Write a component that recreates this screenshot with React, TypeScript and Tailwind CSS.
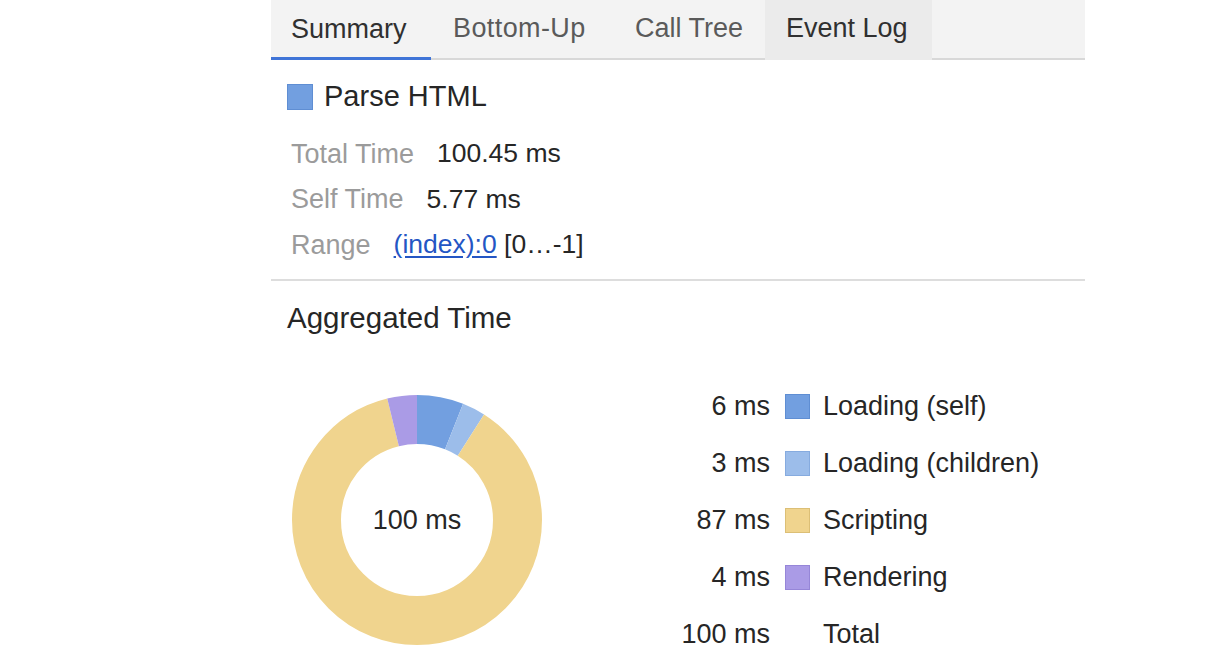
import React from "react";

type Slice = { label: string; value: number; ms: string; color: string; edge: string };

const slices: Slice[] = [
  { label: "Loading (self)", value: 6, ms: "6 ms", color: "#729fe0", edge: "#5f8ed3" },
  { label: "Loading (children)", value: 3, ms: "3 ms", color: "#9cbdea", edge: "#86abdf" },
  { label: "Scripting", value: 87, ms: "87 ms", color: "#f0d48e", edge: "#dcbf76" },
  { label: "Rendering", value: 4, ms: "4 ms", color: "#aa9be6", edge: "#9686d8" },
];

const tabs = [
  { name: "Summary", cls: "w-[160px] pl-[20px] pt-[1px] text-[#303030] border-b-[3px] border-[#3f74d7]" },
  { name: "Bottom-Up", cls: "w-[183px] pl-[22px] pb-[3px] text-[#5a5a5a] tracking-[0.4px]" },
  { name: "Call Tree", cls: "w-[151px] pl-[21px] pb-[3px] text-[#5a5a5a]" },
  { name: "Event Log", cls: "w-[167px] pl-[21px] pb-[3px] text-[#303030] bg-[#ebebeb]" },
];

const Donut = () => {
  const r = 100.5;
  const c = 2 * Math.PI * r;
  const total = slices.reduce((s, x) => s + x.value, 0);
  let offset = 0;
  return (
    <div className="relative w-[250px] h-[250px] shrink-0">
      <svg width="250" height="250" viewBox="0 0 250 250">
        <g transform="rotate(-90 125 125)">
          {slices.map((s) => {
            const len = (s.value / total) * c;
            const el = (
              <circle
                key={s.label}
                cx="125"
                cy="125"
                r={r}
                fill="none"
                stroke={s.color}
                strokeWidth="49"
                strokeDasharray={`${len} ${c - len}`}
                strokeDashoffset={-offset}
              />
            );
            offset += len;
            return el;
          })}
        </g>
      </svg>
      <div className="absolute inset-0 flex items-center justify-center text-[27px] text-[#262626]">
        100 ms
      </div>
    </div>
  );
};

const InfoRow = ({ label, children }: { label: string; children: React.ReactNode }) => (
  <div className="flex items-center gap-[23px] h-[30px] pl-[20px]">
    <span className="text-[27px] text-[#9b9b9b]">{label}</span>
    <span className="text-[26.5px] text-[#262626]">{children}</span>
  </div>
);

export default function App() {
  return (
    <div
      className="w-[1214px] h-[666px] bg-white overflow-hidden"
      style={{ fontFamily: '"Liberation Sans", Arial, sans-serif' }}
    >
      <div className="ml-[271px] w-[814px]">
        {/* Tab strip */}
        <div className="flex h-[60px] bg-[#f3f3f3] border-b-2 border-[#d8d8d8]">
          {tabs.map((t) => (
            <div
              key={t.name}
              className={`h-[60px] -mb-[2px] flex items-center text-[27px] ${t.cls}`}
            >
              {t.name}
            </div>
          ))}
        </div>

        {/* Title */}
        <div className="flex items-center gap-[11px] h-[30px] mt-[22px] pl-[16px]">
          <span className="w-[26px] h-[26px] bg-[#729fe0] border border-[#5f8ed3]" />
          <span className="text-[29px] text-[#262626]">Parse HTML</span>
        </div>

        <div className="mt-[27px] flex flex-col gap-[15.5px]">
          <InfoRow label="Total Time">100.45 ms</InfoRow>
          <InfoRow label="Self Time">5.77 ms</InfoRow>
          <InfoRow label="Range">
            <a className="text-[#2456c4] underline underline-offset-[3px]">(index):0</a> [0…-1]
          </InfoRow>
        </div>

        <div className="mt-[19px] h-[2px] bg-[#dddddd]" />

        <div className="mt-[20px] h-[34px] flex items-center pl-[16px] text-[29.5px] text-[#262626]">
          Aggregated Time
        </div>

        {/* Chart + legend */}
        <div className="flex items-start mt-[56px] pl-[21px]">
          <div className="mt-[4px]">
            <Donut />
          </div>
          <div className="ml-[128px] flex flex-col gap-[27px]">
            {slices.map((s) => (
              <div key={s.label} className="flex items-center h-[30px] text-[27px] text-[#262626]">
                <span className="w-[100px] text-right">{s.ms}</span>
                <span
                  className="ml-[15px] w-[25px] h-[25px] border"
                  style={{ backgroundColor: s.color, borderColor: s.edge }}
                />
                <span className="ml-[13px]">{s.label}</span>
              </div>
            ))}
            <div className="flex items-center h-[30px] text-[27px] text-[#262626]">
              <span className="w-[100px] text-right">100 ms</span>
              <span className="ml-[15px] w-[25px] h-[25px]" />
              <span className="ml-[13px]">Total</span>
            </div>
          </div>
        </div>
      </div>
    </div>
  );
}
